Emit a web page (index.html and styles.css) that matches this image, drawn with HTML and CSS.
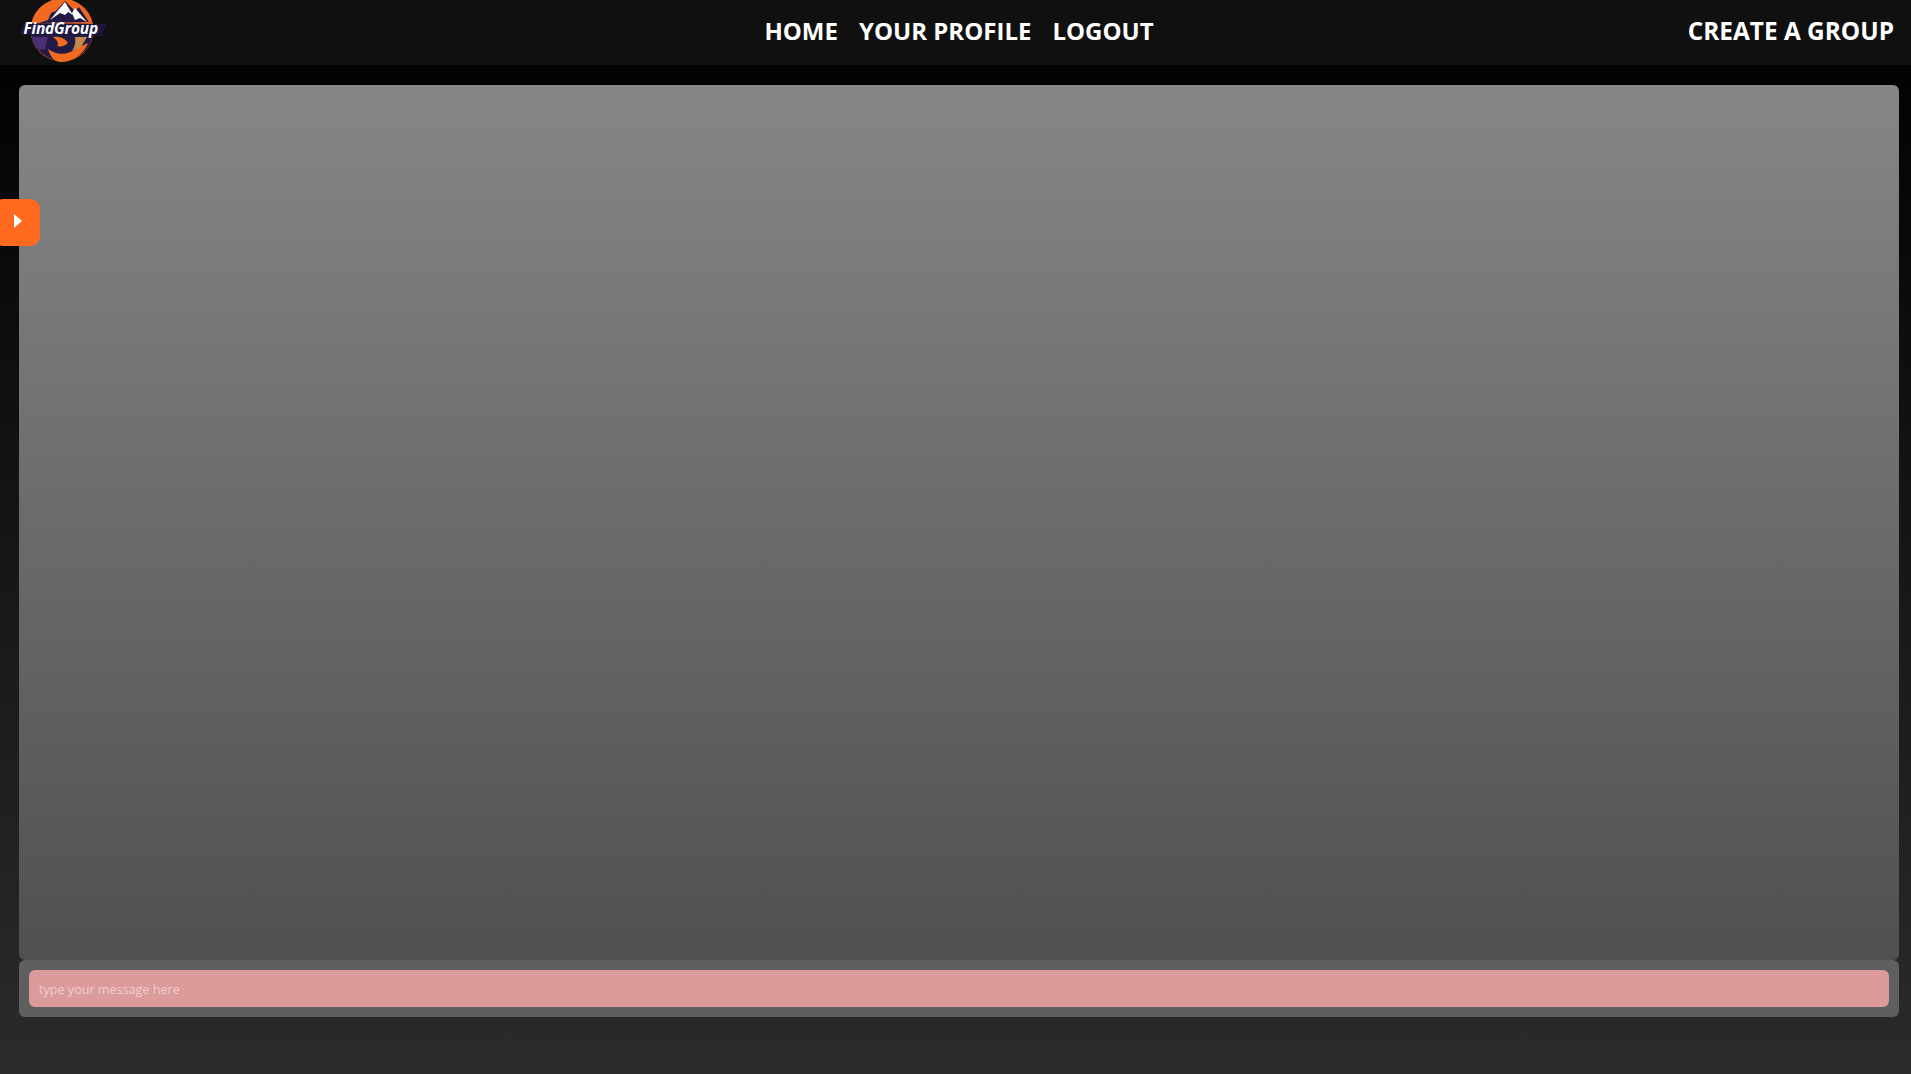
FILE: index.html
```html
<!DOCTYPE html>
<html lang="en">
<head>
<meta charset="utf-8">
<title>FindGroup</title>
<link rel="stylesheet" href="styles.css">
</head>
<body>
<header class="topbar">
  <a class="logo" href="#" aria-label="FindGroup">
    <svg class="logo-svg" viewBox="0 0 95 65" width="95" height="65">
      <circle cx="47" cy="30" r="31.5" fill="#f26a21"/>
      <path d="M16 35 A31.5 31.5 0 0 0 78 35 L78 30 L16 30Z" fill="#221a44"/>
      <path d="M24 23 L33 20 L36 13 L41 11 L50 1 L60 11 L64 7 L74 22 Z" fill="#221a44"/>
      <path d="M35 20 L50 2 L58 15 L53 12 L50 15 L45 13Z" fill="#fff"/>
      <path d="M60 8 L72 22 L65 18 L60 20 L57 13Z" fill="#fff"/>
      <path d="M17 37 L33 37 L30 49 L24 50 C20 46 18 42 17 37Z" fill="#4b3079"/>
      <path d="M38 37 C44 36 50 38 53 43 C50 46 46 47 42 46 C44 44 43 41 38 37Z" fill="#f26a21"/>
      <path d="M33 49 C42 56 54 55 62 48 L73 43 C69 54 58 62 46 62 C41 62 36 59 33 49Z" fill="#f26a21"/>
      <path d="M60 37 L72 37 L66 47 L57 51 C60 46 61 42 60 37Z" fill="#c18a4c"/>
      <path d="M9 23 L91 24 L87 36 L5 34Z" fill="#1a1840"/>
      <text class="logo-text" x="8.5" y="33.5">FindGroup</text>
    </svg>
  </a>
  <nav class="main-nav">
    <a class="nav-link" href="#">HOME</a>
    <a class="nav-link" href="#">YOUR PROFILE</a>
    <a class="nav-link" href="#">LOGOUT</a>
  </nav>
  <a class="nav-link create" href="#">CREATE A GROUP</a>
</header>

<button class="drawer-toggle" type="button" aria-label="Open sidebar">
  <svg viewBox="0 0 8 14" width="8" height="14"><path d="M0 0 L8 7 L0 14Z" fill="#fff"/></svg>
</button>

<main class="chat">
  <section class="messages"></section>
  <form class="composer">
    <input class="composer-input" type="text" placeholder="type your message here">
  </form>
</main>
</body>
</html>
```
FILE: styles.css
```css
* { box-sizing: border-box; }
html, body { height: 100%; }
body {
  margin: 0;
  height: 1074px;
  overflow: hidden;
  background: linear-gradient(to bottom, #000 0, #2b2b2b 100%);
  font-family: "Open Sans", "Noto Sans", sans-serif;
}
.topbar {
  height: 65px;
  background: #101010;
  display: grid;
  grid-template-columns: 1fr auto 1fr;
  align-items: center;
  padding: 0 17px 0 15px;
}
.logo { display: block; height: 65px; width: 95px; }
.logo-svg { display: block; overflow: hidden; }
.logo-text {
  font: italic 700 15.5px "Open Sans", sans-serif;
  fill: #fff;
  letter-spacing: -0.2px;
}
.main-nav {
  display: flex;
  gap: 21px;
  margin-left: 9px;
  margin-bottom: 3px;
}
.nav-link {
  color: #fff;
  text-decoration: none;
  font-size: 24px;
  font-weight: 700;
  line-height: 30px;
  white-space: nowrap;
}
.create { justify-self: end; font-size: 24.4px; margin-bottom: 3px; }
.drawer-toggle {
  position: absolute;
  left: -7px;
  top: 199px;
  width: 47px;
  height: 47px;
  border: 0;
  padding: 0 0 3px 3px;
  border-radius: 10px;
  background: #ff6a1f;
  display: flex;
  align-items: center;
  justify-content: center;
}
.chat {
  padding: 20px 12px 0 19px;
}
.messages {
  height: 875px;
  border-radius: 6px;
  background: linear-gradient(to bottom, #868686 0, #505050 100%);
}
.composer {
  height: 57px;
  padding: 10px;
  border-radius: 6px;
  background: #5f5f5f;
}
.composer-input {
  display: block;
  width: 100%;
  height: 37px;
  border: 0;
  border-radius: 6px;
  padding: 1px 10px 0;
  background: #dc9a9b;
  color: #fff;
  font-family: "Open Sans", sans-serif;
  font-size: 12.6px;
  outline: none;
}
.composer-input::placeholder { color: #f1cdcd; opacity: 1; }
```
